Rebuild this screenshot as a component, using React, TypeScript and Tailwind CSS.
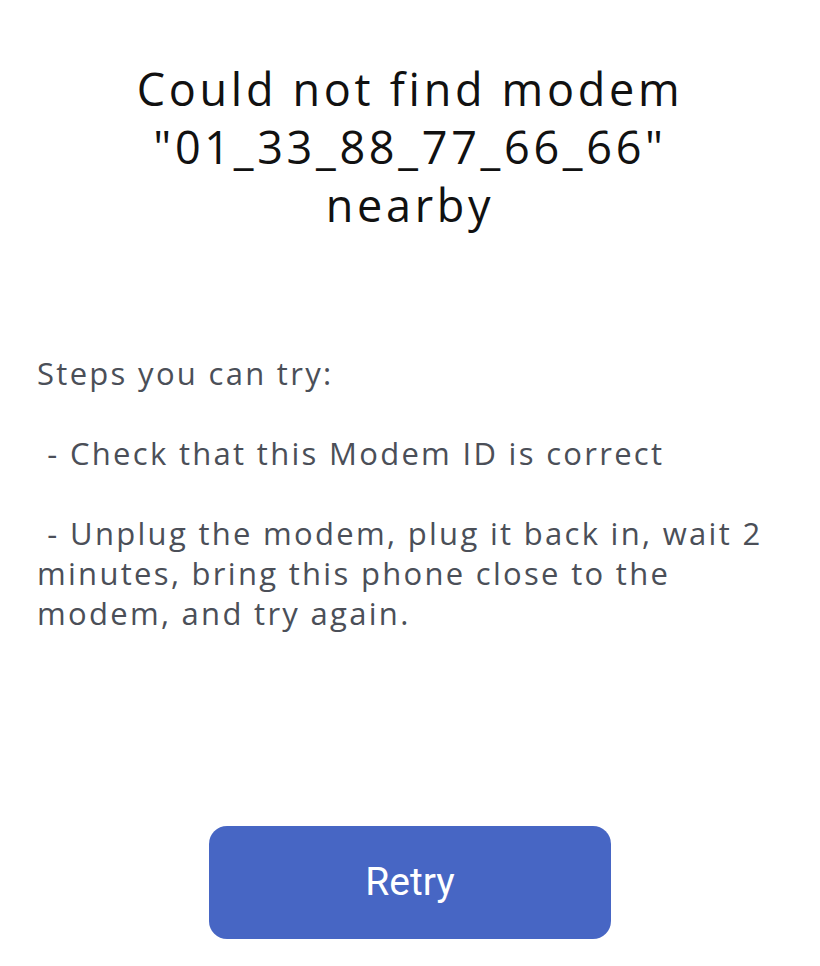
export default function App() {
  return (
    <div className="flex h-[966px] w-[820px] flex-col bg-white [font-family:'Open_Sans',sans-serif]">
      <h1 className="mt-[60px] px-6 text-center text-[45px] leading-[58px] font-normal tracking-[3.7px] text-[#111111]">
        Could not find modem
        <br />
        "01_33_88_77_66_66"
        <br />
        nearby
      </h1>
      <div className="mt-[119px] pl-[37px] pr-[30px] text-[31px] leading-[40px] tracking-[2.3px] text-[#4b4f58]">
        <p>Steps you can try:</p>
        <p className="mt-10">&nbsp;- Check that this Modem ID is correct</p>
        <p className="mt-10">&nbsp;- Unplug the modem, plug it back in, wait 2 minutes, bring this phone close to the modem, and try again.</p>
      </div>
      <div className="mt-auto mb-[27px] flex justify-center">
        <button className="h-[113px] w-[402px] rounded-[18px] bg-[#4766c4] text-[39px] text-white [font-family:Roboto,sans-serif]">
          Retry
        </button>
      </div>
    </div>
  );
}
